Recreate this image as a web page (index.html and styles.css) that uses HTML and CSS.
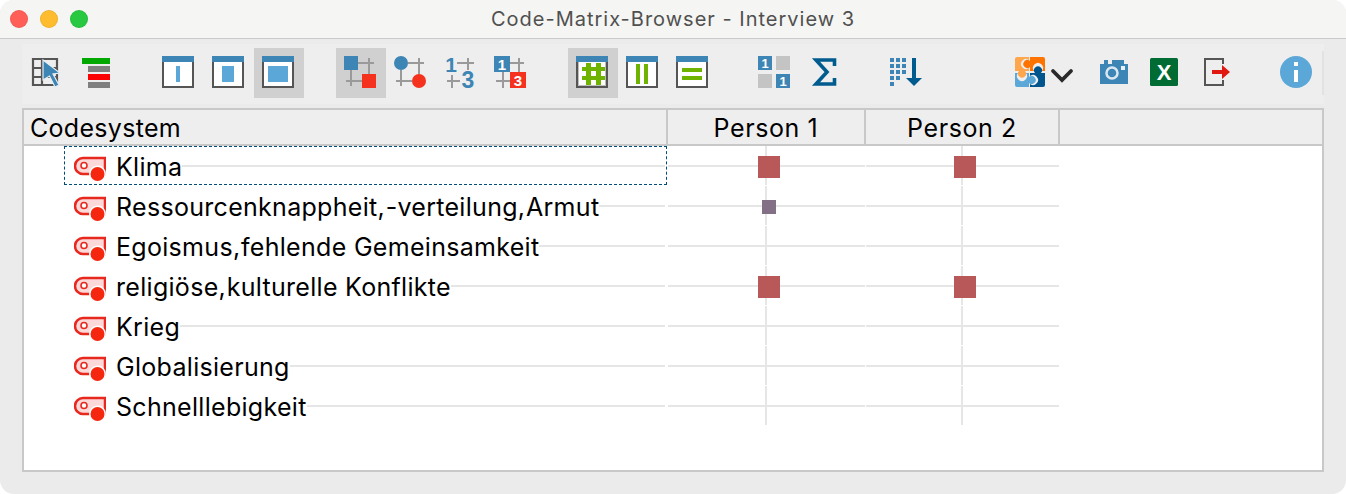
FILE: index.html
```html
<!DOCTYPE html>
<html lang="de">
<head>
<meta charset="utf-8">
<title>Code-Matrix-Browser - Interview 3</title>
<link rel="stylesheet" href="styles.css">
</head>
<body>
<svg class="defs"><symbol id="tag" viewBox="0 0 32 26"><path d="M31 3H9a8 8 0 0 0 0 16H31z" fill="#fcd8d8" stroke="#e8281e" stroke-width="2.500"/><circle cx="10" cy="10.500" r="3" fill="#fff" stroke="#e8281e" stroke-width="1.600"/><circle cx="23.500" cy="19" r="8.500" fill="#fff"/><circle cx="23.500" cy="19" r="7" fill="#f5280f"/></symbol></svg>
<div class="window">
  <header class="titlebar">
    <div class="lights"><span class="light red"></span><span class="light amber"></span><span class="light green"></span></div>
    <div class="title">Code-Matrix-Browser - Interview 3</div>
  </header>
  <nav class="toolbar">
    <div class="group g1">
      <div class="btn"><svg viewBox="0 0 50 50"><path d="M13 11h24v26H13zM13 20h24M13 29h24M22 11v26" fill="none" stroke="#555" stroke-width="2.200"/><path d="M23 12 40 25l-7 1 6 11-4 2-5.500-11-6.500 4z" fill="#3d85b5" stroke="#e6eef4" stroke-width="1.200"/></svg></div>
      <div class="btn"><svg viewBox="0 0 50 50"><path fill="#00a800" d="M12 10h28v6H12z"/><path fill="#7f7f7f" d="M18 18h22v6H18zM18 34h22v6H18z"/><path fill="#f00" d="M18 26h22v6H18z"/></svg></div>
    </div>
    <div class="group g2">
      <div class="btn"><svg viewBox="0 0 50 50"><path fill="#fff" d="M9 9h30v30H9z"/><path fill="none" stroke="#555" stroke-width="2" d="M9 9v30h30V9"/><path fill="#3d85b5" d="M8 8h32v6H8z"/><path fill="#5ba7d8" d="M22 18h4v16h-4z"/></svg></div>
      <div class="btn"><svg viewBox="0 0 50 50"><path fill="#fff" d="M9 9h30v30H9z"/><path fill="none" stroke="#555" stroke-width="2" d="M9 9v30h30V9"/><path fill="#3d85b5" d="M8 8h32v6H8z"/><path fill="#5ba7d8" d="M18 18h12v16H18z"/></svg></div>
      <div class="btn on"><svg viewBox="0 0 50 50"><path fill="#fff" d="M9 9h30v30H9z"/><path fill="none" stroke="#555" stroke-width="2" d="M9 9v30h30V9"/><path fill="#3d85b5" d="M8 8h32v6H8z"/><path fill="#5ba7d8" d="M14 18h20v16H14z"/></svg></div>
    </div>
    <div class="group g3">
      <div class="btn on"><svg viewBox="0 0 50 50"><path class="ln" d="M22 15h16M33 10v16M15 22v16M10 33h16"/><path fill="#3d85b5" d="M8 8h14v14H8z"/><path fill="#f5321e" d="M26 26h14v14H26z"/></svg></div>
      <div class="btn"><svg viewBox="0 0 50 50"><path class="ln" d="M22 15h16M33 10v16M15 22v16M10 33h16"/><circle cx="15" cy="15" r="7" fill="#3d85b5"/><circle cx="33" cy="33" r="7" fill="#f5321e"/></svg></div>
      <div class="btn"><svg viewBox="0 0 50 50"><path class="ln" d="M21 15h17M32 10v12M11 33h13M16 27v13"/><text class="num one" x="15" y="24" text-anchor="middle">1</text><text class="num" x="32" y="40" text-anchor="middle">3</text></svg></div>
      <div class="btn"><svg viewBox="0 0 50 50"><path class="ln" d="M24 15h14M33 10v14M17 24v16M10 33h14"/><path fill="#3d85b5" d="M8 8h16v16H8z"/><path fill="#f5321e" d="M24 24h16v16H24z"/><text class="mini" x="16" y="21.500" text-anchor="middle">1</text><text class="mini" x="32" y="37.500" text-anchor="middle">3</text></svg></div>
    </div>
    <div class="group g4">
      <div class="btn on"><svg viewBox="0 0 50 50"><path fill="#fff" stroke="#bdbdbd" stroke-width="1" d="M10.500 12h27v25.500h-27z"/><path fill="none" stroke="#555" stroke-width="2" d="M9 9v30h30V9"/><path fill="#3d85b5" d="M8 8h32v6H8z"/><path fill="none" stroke="#6db300" stroke-width="5" d="M20.500 15v22M30.500 15v22"/><path fill="none" stroke="#6db300" stroke-width="4" d="M14 21h23M14 30h23"/></svg></div>
      <div class="btn"><svg viewBox="0 0 50 50"><path fill="#fff" d="M9 9h30v30H9z"/><path fill="none" stroke="#555" stroke-width="2" d="M9 9v30h30V9"/><path fill="#3d85b5" d="M8 8h32v6H8z"/><path fill="#6db300" d="M18 16h4v20h-4zM26 16h4v20h-4z"/></svg></div>
      <div class="btn"><svg viewBox="0 0 50 50"><path fill="#fff" d="M9 9h30v30H9z"/><path fill="none" stroke="#555" stroke-width="2" d="M9 9v30h30V9"/><path fill="#3d85b5" d="M8 8h32v6H8z"/><path fill="#6db300" d="M14 20h20v4H14zM14 28h20v4H14z"/></svg></div>
    </div>
    <div class="group g5">
      <div class="btn"><svg viewBox="0 0 50 50"><path fill="#c4c4c4" d="M27 8h14v14H27zM9 26h14v14H9z"/><path fill="#3d85b5" d="M9 8h14v14H9zM27 26h14v14H27z"/><text class="tiny" x="16" y="20" text-anchor="middle">1</text><text class="tiny" x="34" y="38" text-anchor="middle">1</text></svg></div>
      <div class="btn"><svg viewBox="0 0 50 50"><path fill="none" stroke="#005b8f" stroke-width="3.600" d="M35.500 18v-6H17l11 12-11 12h18.500v-6"/></svg></div>
    </div>
    <div class="group g6">
      <div class="btn"><svg viewBox="0 0 50 50"><path fill="#3d85b5" d="M7 10h4v4H7zM13 10h4v4h-4zM19 10h4v4h-4zM7 16h4v4H7zM13 16h4v4h-4zM19 16h4v4h-4zM7 22h4v4H7zM13 22h4v4h-4zM19 22h4v4h-4zM7 28h4v4H7zM13 28h4v4h-4zM7 34h4v4H7z"/><path fill="#005b8f" d="M29 10h4v20h6l-8 8-8-8h6z"/></svg></div>
    </div>
    <div class="group g7">
      <div class="btn wide"><svg class="svgwide" viewBox="0 0 60 50">
        <path fill="#ffa64d" d="M2 9H14V12A5 5 0 1 0 14 20V23H10A4 4 0 1 1 4 23H0V11a2 2 0 0 1 2-2z"/>
        <path fill="#ff7300" d="M15 9H28a2 2 0 0 1 2 2V23H27A5 5 0 1 0 19 23H15V19A4 4 0 1 1 15 13z"/>
        <path fill="#5ba7d8" d="M0 25H3A5 5 0 1 0 11 25H14V29A4 4 0 1 1 14 35V39H2a2 2 0 0 1-2-2z"/>
        <path fill="#00558c" d="M15 25H20A4 4 0 1 1 26 25H30V37a2 2 0 0 1-2 2H15V36A5 5 0 1 0 15 28z"/>
        <path fill="none" stroke="#2a2a2a" stroke-width="3.800" stroke-linecap="round" d="M38 23l9 9 9-9"/></svg></div>
      <div class="btn"><svg viewBox="0 0 50 50"><path fill="#3d85b5" d="M11 16h4v-4h4v4h4v-4h12v4h4v20H11z"/><circle cx="23" cy="25" r="5.500" fill="none" stroke="#dbe8f1" stroke-width="2.500"/><path fill="#e8f0f6" d="M32 18h4v4h-4z"/></svg></div>
      <div class="btn"><svg viewBox="0 0 50 50"><rect x="11" y="10" width="28" height="28" rx="1.500" fill="#006b33"/><text class="xl" x="25" y="32" text-anchor="middle">X</text></svg></div>
      <div class="btn"><svg viewBox="0 0 50 50"><path fill="none" stroke="#555" stroke-width="2" d="M34 16v-5H16v26h18v-5"/><path fill="#e0180f" d="M23 22h10v-5l8 7-8 7v-5H23z"/></svg></div>
    </div>
    <div class="btn info"><svg viewBox="0 0 50 50"><circle cx="25" cy="24" r="16" fill="#5ba7d8"/><path fill="#fff" d="M23 22h4v12h-4zM23 14h4v4h-4z"/></svg></div>
    <div class="sep"></div>
  </nav>
  <main class="matrix">
    <div class="head">
      <div class="hcell first">Codesystem</div>
      <div class="hcell col1">Person 1</div>
      <div class="hcell col2">Person 2</div>
    </div>
    <div class="body">
      <div class="row">
        <div class="code focus"><svg class="tag"><use href="#tag"/></svg><span class="label">Klima</span><span class="rule"></span></div>
        <div class="cell"><span class="sq big"></span></div><div class="cell"><span class="sq big"></span></div>
      </div>
      <div class="row">
        <div class="code"><svg class="tag"><use href="#tag"/></svg><span class="label">Ressourcenknappheit,<span class="sp"> </span>-verteilung,<span class="sp"> </span>Armut</span><span class="rule"></span></div>
        <div class="cell"><span class="sq small"></span></div><div class="cell"></div>
      </div>
      <div class="row">
        <div class="code"><svg class="tag"><use href="#tag"/></svg><span class="label">Egoismus,<span class="sp"> </span>fehlende Gemeinsamkeit</span><span class="rule"></span></div>
        <div class="cell"></div><div class="cell"></div>
      </div>
      <div class="row">
        <div class="code"><svg class="tag"><use href="#tag"/></svg><span class="label">religiöse,<span class="sp"> </span>kulturelle Konflikte</span><span class="rule"></span></div>
        <div class="cell"><span class="sq big"></span></div><div class="cell"><span class="sq big"></span></div>
      </div>
      <div class="row">
        <div class="code"><svg class="tag"><use href="#tag"/></svg><span class="label">Krieg</span><span class="rule"></span></div>
        <div class="cell"></div><div class="cell"></div>
      </div>
      <div class="row">
        <div class="code"><svg class="tag"><use href="#tag"/></svg><span class="label">Globalisierung</span><span class="rule"></span></div>
        <div class="cell"></div><div class="cell"></div>
      </div>
      <div class="row">
        <div class="code"><svg class="tag"><use href="#tag"/></svg><span class="label">Schnelllebigkeit</span><span class="rule"></span></div>
        <div class="cell"></div><div class="cell"></div>
      </div>
    </div>
  </main>
</div>
</body>
</html>
```
FILE: styles.css
```css
* { box-sizing: border-box; }
html, body { margin: 0; padding: 0; background: #fff; }
body { width: 1346px; height: 494px; overflow: hidden; font-family: Inter, "Noto Sans", sans-serif; }
.defs { display: none; }
.window { width: 1346px; height: 494px; background: #ebebeb; border-radius: 14px; overflow: hidden; display: flex; flex-direction: column; }
.titlebar { height: 39px; flex: none; background: #f5f5f3; border-bottom: 1px solid #cbcbcb; display: grid; grid-template-columns: 1fr auto 1fr; align-items: center; }
.lights { display: flex; gap: 12px; padding-left: 10px; }
.light { width: 18px; height: 18px; border-radius: 50%; flex: none; box-shadow: inset 0 0 0 1px rgba(0,0,0,.06); }
.light.red { background: #ff5f57; }
.light.amber { background: #febc2e; }
.light.green { background: #28c840; }
.title { font-size: 20px; letter-spacing: 1px; color: #505050; }
.toolbar { margin: 5px 22px 0; height: 60px; flex: none; background: #eee; display: flex; align-items: center; padding: 0 0 2px; }
.group { display: flex; }
.g1 { margin-left: -2px; margin-right: 34px; }
.g2 { margin-right: 32px; }
.g3 { margin-right: 32px; }
.g4 { margin-right: 31px; }
.g5 { margin-right: 34px; }
.g6 { margin-right: 82px; }
.btn { width: 50px; height: 50px; flex: none; }
.btn svg { display: block; width: 50px; height: 50px; }
.btn.wide { width: 74px; }
.btn .svgwide { width: 60px; }
.btn.on { background: #d0d0d0; }
.info { margin-left: 32px; }
.sep { width: 2px; height: 44px; background: #e2e2e2; margin-left: 1px; }
.ln { fill: none; stroke: #9a9a9a; stroke-width: 2; }
.num { font: 700 23px "Liberation Sans", sans-serif; fill: #3d85b5; }
.one { font-size: 21px; }
.mini { font: 700 15px "Liberation Sans", sans-serif; fill: #fff; }
.tiny { font: 700 13px "Liberation Sans", sans-serif; fill: #fff; }
.xl { font: 700 22px "Liberation Sans", sans-serif; fill: #fff; }
.matrix { margin: 4px 22px 0; height: 364px; flex: none; background: #fff; border: 2px solid #c8c8c8; display: flex; flex-direction: column; }
.head { height: 36px; flex: none; background: #eee; display: flex; border-bottom: 2px solid #c8c8c8; font-size: 25px; color: #000; }
.hcell { display: flex; align-items: center; justify-content: center; padding-top: 1px; border-right: 2px solid #c8c8c8; letter-spacing: .6px; }
.hcell.first { width: 644px; justify-content: flex-start; padding-left: 6px; letter-spacing: .3px; }
.hcell.col1 { width: 198px; }
.hcell.col2 { width: 194px; }
.body { display: flex; flex-direction: column; }
.row { height: 40px; display: flex; }
.code { width: 644px; height: 40px; padding: 0 3px 0 50px; display: flex; align-items: center; position: relative; }
.focus::after { content: ""; position: absolute; left: 40px; right: 1px; top: 0; bottom: 1px; border: 1px dashed #004c7a; }
.tag { width: 32px; height: 26px; flex: none; margin-top: 4px; margin-right: 10px; }
.label { font-size: 25px; color: #000; letter-spacing: .3px; white-space: nowrap; margin-top: 2px; }
.sp { font-size: 1px; }
.rule { flex: 1; height: 2px; background: #e6e6e6; }
.cell { height: 40px; display: flex; align-items: center; justify-content: center; background: linear-gradient(#e6e6e6, #e6e6e6) 0 50% / calc(100% - 1px) 2px no-repeat, linear-gradient(#e6e6e6, #e6e6e6) calc(50% - 1px) 0 / 2px calc(100% - 1px) no-repeat; }
.row .cell:nth-child(2) { width: 198px; }
.row .cell:nth-child(3) { width: 194px; }
.sq { display: block; }
.sq.big { width: 22px; height: 22px; background: #b85858; margin: 2px 0 0 4px; }
.sq.small { width: 14px; height: 14px; background: #837087; margin: 2px 0 0 4px; }
```
